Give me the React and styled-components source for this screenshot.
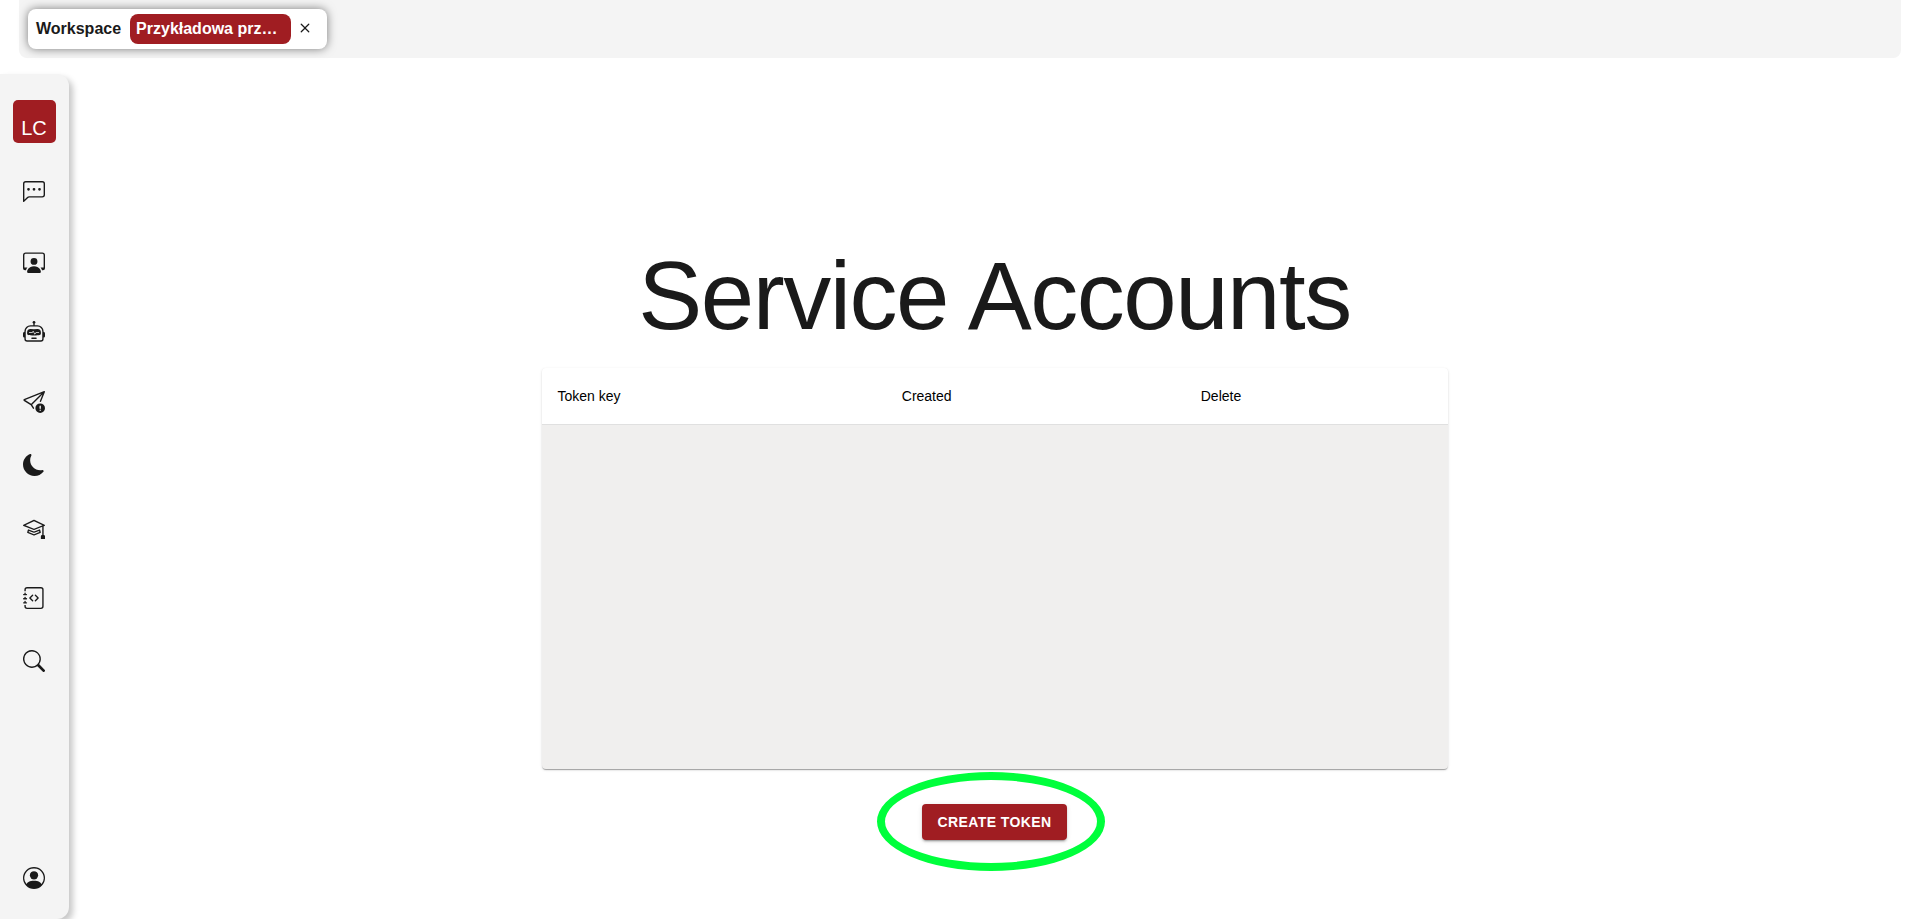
import React from "react";
import styled, { createGlobalStyle } from "styled-components";
import {
  BsChatLeftDots,
  BsJournalCode,
  BsMoonFill,
  BsMortarboard,
  BsPersonCircle,
  BsPersonWorkspace,
  BsRobot,
  BsSearch,
  BsSendExclamation,
  BsX,
} from "react-icons/bs";

const GlobalStyle = createGlobalStyle`
  * {
    box-sizing: border-box;
  }
  body {
    margin: 0;
    background-color: #fff;
    color: #1a1a1a;
    font-family: "Liberation Sans", Arial, sans-serif;
    font-size: 16px;
  }
`;

const Page = styled.div`
  min-height: 100vh;
  display: flex;
  flex-direction: column;
  gap: 16px;
`;
const TopBar = styled.header`
  height: 58px;
  margin: 0 19px;
  padding: 9px;
  background-color: #f4f4f4;
  border-radius: 0 0 8px 8px;
`;
const Workspace = styled.div`
  width: 299px;
  height: 40px;
  padding: 0 8px;
  display: flex;
  align-items: center;
  background-color: #fff;
  border-radius: 8px;
  box-shadow: 0 0 10px rgba(0, 0, 0, 0.5);
  font-weight: bold;
`;
const WorkspaceName = styled.span`
  width: 161px;
  height: 30px;
  margin-left: 9px;
  padding: 0 6px;
  line-height: 29px;
  color: #fff;
  background-color: #a01d22;
  border-radius: 8px;
  white-space: nowrap;
`;
const CloseButton = styled.button`
  margin-left: 4px;
  padding: 0 0 2px;
  display: flex;
  border: none;
  background: none;
  color: #1a1a1a;
  cursor: pointer;
`;
const Body = styled.div`
  flex: 1;
  display: flex;
`;
const Sidebar = styled.nav`
  width: 69px;
  padding: 26px 1px 30px 0;
  display: flex;
  flex-direction: column;
  align-items: center;
  background-color: #f4f4f4;
  border-radius: 0 12px 12px 0;
  box-shadow: 4px 4px 6px rgba(0, 0, 0, 0.22);
`;
const Logo = styled.a`
  width: 43px;
  height: 43px;
  margin-bottom: 38px;
  padding-top: 11px;
  line-height: 34px;
  font-size: 20px;
  text-align: center;
  text-decoration: none;
  color: #fff;
  background-color: #a01d22;
  border-radius: 5px;
`;
const NavButton = styled.button`
  margin: 0 0 ${(props) => (props.$wide ? "48px" : "41px")};
  padding: 0;
  display: flex;
  border: none;
  background: none;
  color: #1a1a1a;
  font-size: 22px;
  cursor: pointer;
`;
const ProfileButton = styled(NavButton)`
  margin: auto 0 0;
`;
const Main = styled.main`
  flex: 1;
  padding-top: 166px;
  display: flex;
  flex-direction: column;
  align-items: center;
`;
const Title = styled.h1`
  margin: 0 0 16px;
  font-size: 96px;
  font-weight: 300;
  line-height: 112px;
  letter-spacing: -0.01562em;
`;
const TablePaper = styled.div`
  width: 49%;
  max-width: 906px;
  min-height: 401px;
  background-color: #f0efee;
  border-radius: 4px;
  box-shadow: 0 2px 1px -1px rgba(0, 0, 0, 0.2),
    0 1px 1px 0 rgba(0, 0, 0, 0.14), 0 1px 3px 0 rgba(0, 0, 0, 0.12);
  overflow: hidden;
`;
const Table = styled.table`
  width: 100%;
  table-layout: fixed;
  border-collapse: collapse;
  background-color: #fff;
`;
const HeadCell = styled.th`
  width: ${(props) => props.$width};
  height: 56px;
  padding: 0 16px;
  border-bottom: 1px solid #e0e0e0;
  font-size: 14px;
  font-weight: normal;
  text-align: left;
  color: #000;
`;
const ButtonWrapper = styled.div`
  position: relative;
  margin-top: 35px;
`;
const CreateButton = styled.button`
  height: 36px;
  padding: 0 16px;
  border: none;
  border-radius: 4px;
  font-family: inherit;
  font-size: 14px;
  font-weight: bold;
  letter-spacing: 0.02857em;
  text-transform: uppercase;
  color: #fff;
  background-color: #a01d22;
  box-shadow: 0 3px 1px -2px rgba(0, 0, 0, 0.2),
    0 2px 2px 0 rgba(0, 0, 0, 0.14), 0 1px 5px 0 rgba(0, 0, 0, 0.12);
  cursor: pointer;
`;
const Highlight = styled.div`
  position: absolute;
  top: -32px;
  left: -45px;
  width: 228px;
  height: 99px;
  border: 8px solid #00ff3c;
  border-radius: 50%;
  pointer-events: none;
`;

const navItems = [
  { label: "Chat", icon: <BsChatLeftDots />, wide: true },
  { label: "Contacts", icon: <BsPersonWorkspace />, wide: true },
  { label: "Bots", icon: <BsRobot />, wide: true },
  { label: "Campaigns", icon: <BsSendExclamation /> },
  { label: "Dark mode", icon: <BsMoonFill /> },
  { label: "Tutorials", icon: <BsMortarboard />, wide: true },
  { label: "API docs", icon: <BsJournalCode /> },
  { label: "Search", icon: <BsSearch /> },
];

const columns = [
  { name: "Token key", width: "38%" },
  { name: "Created", width: "33%" },
  { name: "Delete", width: "29%" },
];

const App = () => {
  return (
    <Page>
      <GlobalStyle />
      <TopBar>
        <Workspace>
          Workspace
          <WorkspaceName>Przykładowa prz…</WorkspaceName>
          <CloseButton aria-label="Close workspace">
            <BsX size={20} />
          </CloseButton>
        </Workspace>
      </TopBar>
      <Body>
        <Sidebar>
          <Logo href="#">LC</Logo>
          {navItems.map((item) => (
            <NavButton
              key={item.label}
              aria-label={item.label}
              $wide={item.wide}
            >
              {item.icon}
            </NavButton>
          ))}
          <ProfileButton aria-label="Profile">
            <BsPersonCircle />
          </ProfileButton>
        </Sidebar>
        <Main>
          <Title>Service Accounts</Title>
          <TablePaper>
            <Table>
              <thead>
                <tr>
                  {columns.map((column) => (
                    <HeadCell key={column.name} $width={column.width}>
                      {column.name}
                    </HeadCell>
                  ))}
                </tr>
              </thead>
            </Table>
          </TablePaper>
          <ButtonWrapper>
            <CreateButton>Create token</CreateButton>
            <Highlight />
          </ButtonWrapper>
        </Main>
      </Body>
    </Page>
  );
};

export default App;
